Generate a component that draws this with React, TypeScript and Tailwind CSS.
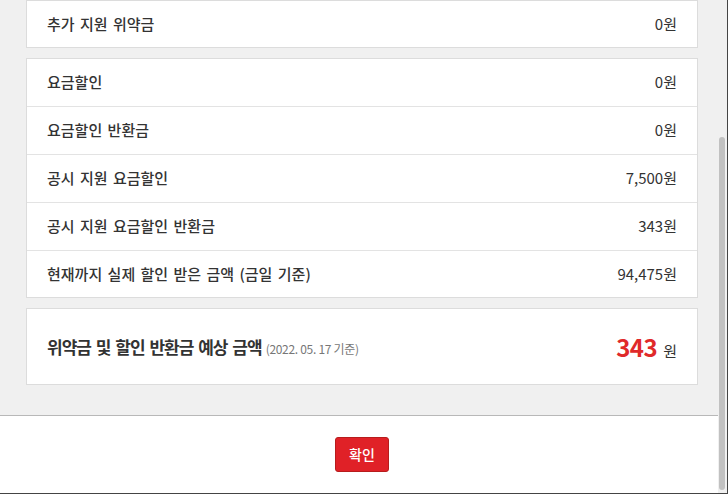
const ROWS = [
  { label: "요금할인", value: "0원" },
  { label: "요금할인 반환금", value: "0원" },
  { label: "공시 지원 요금할인", value: "7,500원" },
  { label: "공시 지원 요금할인 반환금", value: "343원" },
  { label: "현재까지 실제 할인 받은 금액 (금일 기준)", value: "94,475원" },
];

function Row({ label, value, last }: { label: string; value: string; last?: boolean }) {
  return (
    <div
      className={`flex items-center justify-between px-5 ${last ? "h-[46px]" : "h-12 border-b border-[#e3e3e3]"}`}
    >
      <span className="text-[15px] font-medium text-[#333] [word-spacing:2px]">{label}</span>
      <span className="text-[15px] text-[#333]">{value}</span>
    </div>
  );
}

export default function App() {
  return (
    <div
      className="flex h-[494px] w-[728px] border-r border-b border-[#444] bg-white"
      style={{ fontFamily: '"Noto Sans CJK KR", "Noto Sans", sans-serif' }}
    >
      <div className="flex w-[718px] flex-col">
        {/* 내용 영역 */}
        <div className="flex flex-col gap-[10px] bg-[#f0f0f0] pr-[20px] pb-[30px] pl-[26px]">
          <div className="border border-[#dcdcdc] bg-white">
            <Row label="추가 지원 위약금" value="0원" last />
          </div>

          <div className="border border-[#dcdcdc] bg-white">
            {ROWS.map((r, i) => (
              <Row key={r.label} label={r.label} value={r.value} last={i === ROWS.length - 1} />
            ))}
          </div>

          <div className="flex h-[77px] items-center justify-between border border-[#dcdcdc] bg-white px-5">
            <div className="flex items-baseline gap-1">
              <span className="text-[17px] font-bold tracking-[-1px] text-[#333] [word-spacing:2px]">
                위약금 및 할인 반환금 예상 금액
              </span>
              <span className="text-[12px] tracking-[-0.3px] text-[#777]">(2022. 05. 17 기준)</span>
            </div>
            <div className="flex items-baseline gap-[6px]">
              <span className="text-[24px] font-semibold tracking-[-0.5px] text-[#e02a2a]">343</span>
              <span className="text-[15px] text-[#333]">원</span>
            </div>
          </div>
        </div>

        {/* 하단 버튼 */}
        <div className="flex flex-1 items-center justify-center border-t border-[#b8b8b8] bg-white pl-[6px]">
          <button className="h-[35px] w-[54px] rounded-[3px] border border-[#b71c1c] bg-[#e02127] text-[14px] font-medium text-white">
            확인
          </button>
        </div>
      </div>

      {/* 스크롤바 */}
      <div className="flex w-[9px] flex-col bg-[#f0f0f0] pt-[137px] pb-[3px] pl-px">
        <div className="w-[6px] flex-1 rounded-full bg-[#c1c1c1]" />
      </div>
    </div>
  );
}
